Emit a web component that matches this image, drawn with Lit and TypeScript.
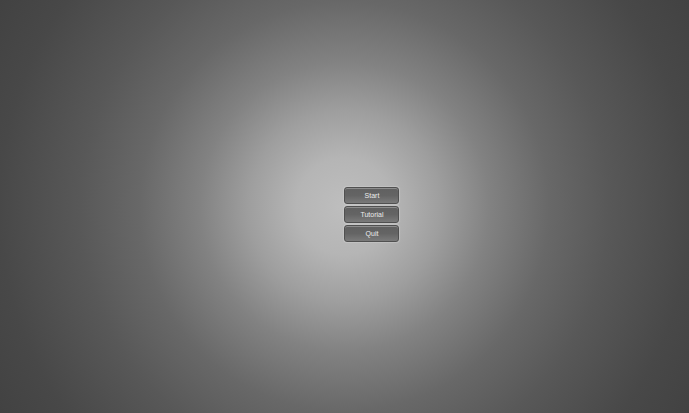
import { LitElement, html, css } from 'lit';
import { customElement } from 'lit/decorators.js';

@customElement('menu-button')
export class MenuButton extends LitElement {
    static styles = css`
        :host {
            display: block;
        }
        button {
            display: block;
            width: 100%;
            height: 17px;
            padding: 0 0 0 2px;
            border: 1px solid #505050;
            border-radius: 3px;
            background: linear-gradient(#606060, #646464 50%, #7a7a7a);
            box-shadow:
                inset 0 1px 0 #8c8c8c,
                0 0 1px 1px rgba(215, 215, 215, .4);

            color: #ececec;
            font-family: "Liberation Sans", Arial, sans-serif;
            font-size: 7px;
            line-height: 15px;
            text-align: center;
            cursor: pointer;
        }
        button:hover {
            color: #fff;
        }
    `;

    render() {
        return html`<button type="button"><slot></slot></button>`;
    }
}

@customElement('app-root')
export class AppRoot extends LitElement {
    static styles = css`
        :host {
            display: block;
        }
        .screen {
            display: flex;
            align-items: center;
            box-sizing: border-box;
            min-height: 100vh;
            padding-top: 16px;
            padding-left: calc(50% - 1px);
            background: radial-gradient(
                circle at center,
                #bebebe 0,
                #b5b5b5 12%,
                #9e9e9e 24%,
                #828282 36%,
                #686868 51%,
                #585858 66%,
                #484848 86%,
                #424242 100%
            );
        }
        .menu {
            display: grid;
            gap: 2px;
            width: 55px;
        }
    `;

    render() {
        return html`
            <main class="screen">
                <nav class="menu">
                    <menu-button>Start</menu-button>
                    <menu-button>Tutorial</menu-button>
                    <menu-button>Quit</menu-button>
                </nav>
            </main>
        `;
    }
}
